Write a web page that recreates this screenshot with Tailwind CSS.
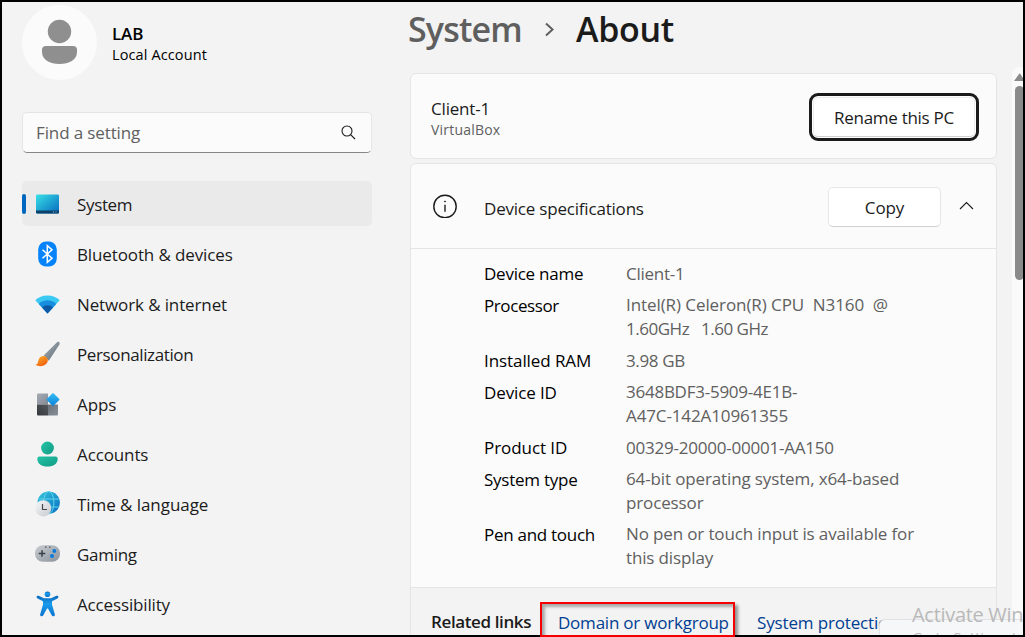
<!DOCTYPE html>
<html lang="en">
<head>
<meta charset="utf-8">
<title>System - About</title>
<script src="https://cdn.jsdelivr.net/npm/@tailwindcss/browser@4"></script>
</head>
<body class="bg-[#f3f3f3]">
<div class="relative flex w-[1025px] h-[637px] overflow-hidden border-2 border-black bg-[#f3f3f3] text-[#1b1b1b] text-[17px] tracking-[-0.120px] font-['Open_Sans','Noto_Sans',sans-serif] whitespace-nowrap">

  <aside class="w-[370px] shrink-0 pl-5 pt-[3px]">
    <div class="flex items-center h-[75px]">
      <svg class="w-[75px] h-[75px]" viewBox="0 0 75 75"><circle cx="37.5" cy="37.5" r="37.5" fill="#fbfbfb"/><circle cx="37.5" cy="26.5" r="11.7" fill="#8f8f8f"/><path d="M24 41h27a4 4 0 0 1 4 4v2c0 8-8 12-17.500 12S20 55 20 47v-2a4 4 0 0 1 4-4z" fill="#8f8f8f"/></svg>
      <div class="ml-[15px] pt-[2px] text-black">
        <div class="text-[17px] leading-[21px] font-semibold">LAB</div>
        <div class="text-[14.500px] leading-[21px] tracking-[0.120px]">Local Account</div>
      </div>
    </div>
    <div class="mt-8 flex items-center justify-between h-[41px] w-[350px] pl-[13px] pr-[15px] rounded-[5px] border border-[#e5e5e5] border-b-[#868686] bg-[#fbfbfb] text-[#606060]">
      <span class="tracking-[-0.120px]">Find a setting</span>
      <svg class="w-[15px] h-[15px]" viewBox="0 0 15 15" fill="none" stroke="#1b1b1b" stroke-width="1.100"><circle cx="6" cy="6" r="5"/><path d="M9.600 9.600 14 14"/></svg>
    </div>
    <nav class="mt-7 flex flex-col gap-[5px] w-[350px]">
      <div class="relative flex items-center h-[45px] pl-[13px] gap-[17px] rounded-[5px] bg-[#eaeaea]">
        <i class="absolute left-0 top-[13px] w-1 h-5 rounded-full bg-[#0067c0]"></i>
        <svg class="w-[25px] h-[26px]" viewBox="0 0 25 26"><defs><linearGradient id="sys" x1="0" y1="0" x2="1" y2="1"><stop stop-color="#37e0e6"/><stop offset="1" stop-color="#0669bf"/></linearGradient></defs><rect x="1" y="3.500" width="23" height="19" rx="1.300" fill="url(#sys)"/><path d="M1 19.500h23v1.800a1.200 1.200 0 0 1-1.200 1.200H2.200A1.200 1.200 0 0 1 1 21.300z" fill="#0b4068"/><path d="M18 21h1m1.500 0h1" stroke="#8ac8e6"/></svg>
        <span class="pt-[2px] tracking-[-0.350px]">System</span>
      </div>
      <div class="flex items-center h-[45px] pl-[13px] gap-[17px]">
        <svg class="w-[25px] h-[26px]" viewBox="0 0 25 26"><rect x="3.200" y=".5" width="18.600" height="25" rx="8" fill="#0683fb"/><path d="m7.500 8.700 9.500 8.600-4.700 4V4.700l4.700 4-9.500 8.600" fill="none" stroke="#fff" stroke-width="1.500"/></svg>
        <span class="pt-[2px]">Bluetooth &amp; devices</span>
      </div>
      <div class="flex items-center h-[45px] pl-[13px] gap-[17px]">
        <svg class="w-[25px] h-[26px]" viewBox="0 0 25 26"><path d="M12.500 22.500.3 9.300Q5 4.500 12.500 4.500T24.700 9.300z" fill="#39c9f3"/><path d="M12.500 22.500 3.800 13Q7.500 9.300 12.500 9.300T21.200 13z" fill="#198ddd"/><path d="M12.500 22.500 7 16.500q2.200-2.300 5.500-2.300t5.500 2.300z" fill="#0c58a4"/></svg>
        <span class="pt-[2px]">Network &amp; internet</span>
      </div>
      <div class="flex items-center h-[45px] pl-[13px] gap-[17px]">
        <svg class="w-[25px] h-[26px]" viewBox="0 0 25 26"><defs><linearGradient id="brush" x1="0" y1="0" x2="1" y2="1"><stop stop-color="#aab4bc"/><stop offset="1" stop-color="#5d6972"/></linearGradient><linearGradient id="paint" x1="0" y1="0" x2=".7" y2="1"><stop stop-color="#ffb52d"/><stop offset="1" stop-color="#ef5d0c"/></linearGradient></defs><path d="M8.700 14.500 22 1.300c1.500-1.200 3.400.3 2.400 2.100L13.800 19.700z" fill="url(#brush)"/><path d="M.5 24c2.700-1 2.300-2.800 3-5 1-3.500 4.400-5 7.300-3.300 3 1.700 2.500 5.700 0 7.600C8 25.500 3.800 25.700.5 24z" fill="url(#paint)"/></svg>
        <span class="pt-[2px] tracking-[-0.380px]">Personalization</span>
      </div>
      <div class="flex items-center h-[45px] pl-[13px] gap-[17px]">
        <svg class="w-[25px] h-[26px]" viewBox="0 0 25 26"><defs><linearGradient id="tileA" x1="0" y1="0" x2="1" y2="1"><stop stop-color="#a6abb4"/><stop offset="1" stop-color="#838993"/></linearGradient><linearGradient id="tileB" x1="0" y1="1" x2="1" y2="0"><stop stop-color="#35393d"/><stop offset="1" stop-color="#54595e"/></linearGradient><linearGradient id="tileC" x1="0" y1="0" x2="1" y2="1"><stop stop-color="#6b7179"/><stop offset="1" stop-color="#8a9098"/></linearGradient><linearGradient id="dia" x1="0" y1="0" x2="1" y2="1"><stop stop-color="#36bff4"/><stop offset="1" stop-color="#0b80db"/></linearGradient></defs><path d="M3 2.500h10V13.500H2v-10a1 1 0 0 1 1-1z" fill="url(#tileA)"/><path d="M2 13.500h11v11H3a1 1 0 0 1-1-1z" fill="url(#tileB)"/><path d="M13 13.500h10v10a1 1 0 0 1-1 1h-9z" fill="url(#tileC)"/><rect x="13.200" y="3.700" width="9.600" height="9.600" rx="1" transform="rotate(45 18 8.500)" fill="url(#dia)"/></svg>
        <span class="pt-[2px]">Apps</span>
      </div>
      <div class="flex items-center h-[45px] pl-[13px] gap-[17px]">
        <svg class="w-[25px] h-[26px]" viewBox="0 0 25 26"><defs><linearGradient id="acc" x1="0" y1="0" x2="1" y2="1"><stop stop-color="#24c3a6"/><stop offset="1" stop-color="#129b85"/></linearGradient></defs><circle cx="12.500" cy="7" r="6.400" fill="url(#acc)"/><path d="M4.500 15.500h16a2.200 2.200 0 0 1 2.200 2.200c0 5-4.200 7.800-10.200 7.800S2.300 22.700 2.300 17.700a2.200 2.200 0 0 1 2.200-2.200z" fill="url(#acc)"/></svg>
        <span class="pt-[2px]">Accounts</span>
      </div>
      <div class="flex items-center h-[45px] pl-[13px] gap-[17px]">
        <svg class="w-[25px] h-[26px]" viewBox="0 0 25 26"><defs><linearGradient id="globe" x1="0" y1="0" x2="1" y2="1"><stop stop-color="#35c8db"/><stop offset="1" stop-color="#086cc2"/></linearGradient><linearGradient id="clk" x1="0" y1="0" x2="1" y2="1"><stop stop-color="#f8f8f9"/><stop offset="1" stop-color="#c5c9ce"/></linearGradient></defs><circle cx="13.700" cy="11.700" r="11.200" fill="url(#globe)"/><g fill="none" stroke="#61d4ed" stroke-width="1"><ellipse cx="13.700" cy="11.700" rx="5.200" ry="11.200"/><path d="M3.700 8h20.200M3.700 16h20.200"/></g><circle cx="8.200" cy="17.300" r="8.100" fill="url(#clk)"/><path d="M7.500 13v5.500H12" fill="none" stroke="#42484e" stroke-width="1.200"/></svg>
        <span class="pt-[2px] tracking-[-0.060px]">Time &amp; language</span>
      </div>
      <div class="flex items-center h-[45px] pl-[13px] gap-[17px]">
        <svg class="w-[25px] h-[26px]" viewBox="0 0 25 26"><defs><linearGradient id="pad" x1="0" y1="0" x2="1" y2="1"><stop stop-color="#c8cdd1"/><stop offset="1" stop-color="#8b939c"/></linearGradient></defs><rect y="4.300" width="25" height="16.400" rx="7.800" fill="url(#pad)"/><path d="M7 9.200v6.600M3.700 12.500h6.600" stroke="#3a4045" stroke-width="1.500"/><circle cx="19.300" cy="10" r="2" fill="#0c7bdc"/><circle cx="17" cy="15" r="2" fill="#0c7bdc"/><path d="M10 6.200h1.500m2.500 0h1.500" stroke="#50575d" stroke-width="1.300"/></svg>
        <span class="pt-[2px] tracking-[-0.300px]">Gaming</span>
      </div>
      <div class="flex items-center h-[45px] pl-[13px] gap-[17px]">
        <svg class="w-[25px] h-[26px]" viewBox="0 0 25 26"><defs><linearGradient id="man" x1="0" y1="0" x2="0" y2="1"><stop stop-color="#0867bd"/><stop offset=".4" stop-color="#199bed"/><stop offset="1" stop-color="#0872ce"/></linearGradient></defs><circle cx="12.500" cy="3.300" r="2.800" fill="url(#man)"/><path d="M3.500 4.800 9 7.200h7l5.500-2.400c2-.6 2.600 1.800 1 2.700L17 10.300v3.200l2.800 9.800c.4 2-2.200 2.800-3.100 1L13 17.500h-1l-3.700 6.800c-.9 1.800-3.500 1-3.100-1L8 13.500v-3.200L2.500 7.500c-1.600-.9-1-3.300 1-2.700z" fill="url(#man)"/></svg>
        <span class="pt-[2px] tracking-[-0.150px]">Accessibility</span>
      </div>
    </nav>
  </aside>

  <main class="ml-[38px] w-[587px] shrink-0">
    <h1 class="flex items-center h-[54px] -ml-[2px] text-[34px] font-semibold">
      <span class="w-[114px] text-[#5f5f5f] tracking-[-0.850px]">System</span>
      <svg class="ml-[23px] w-[9px] h-[15px]" viewBox="0 0 9 15" fill="none" stroke="#5f5f5f" stroke-width="2"><path d="m1 1.500 6.500 6L1 13.500"/></svg>
      <span class="ml-[22px] tracking-[-0.300px]">About</span>
    </h1>
    <section class="mt-[17px] flex items-center justify-between h-[86px] pl-5 pr-[17px] rounded-[6px] border border-[#e5e5e5] bg-[#fbfbfb]">
      <div class="pt-[5px]">
        <div class="leading-[22px] tracking-[-0.180px]">Client-1</div>
        <div class="text-[14px] leading-[20px] tracking-[0.200px] text-[#606060]">VirtualBox</div>
      </div>
      <button class="mt-[2px] h-12 w-[170px] rounded-[9px] border-[3px] border-[#1b1b1b] bg-white p-px tracking-[-0.280px]"><span class="flex items-center justify-center h-full rounded-[5px] border border-[#ececec] border-b-[#cfcfcf] pt-px">Rename this PC</span></button>
    </section>
    <section class="mt-1 h-[480px] rounded-t-[6px] border border-[#e5e5e5] bg-[#fbfbfb]">
      <header class="flex items-center h-[85px] pl-[22px] pr-[22px] border-b border-[#e5e5e5]">
        <svg class="w-6 h-6" viewBox="0 0 24 24" fill="none" stroke="#1b1b1b" stroke-width="1.400"><circle cx="12" cy="12.500" r="11.200"/><path d="M12 10.800v7"/><circle cx="12" cy="7.500" r=".6" fill="#1b1b1b" stroke-width=".7"/></svg>
        <span class="ml-[27px] pt-[6px] tracking-[-0.200px]">Device specifications</span>
        <button class="mt-[2px] ml-auto w-[113px] h-10 rounded-[5px] border border-[#e6e6e6] border-b-[#cfcfcf] bg-white pt-px">Copy</button>
        <svg class="ml-[18px] -mt-px w-[15px] h-[9px]" viewBox="0 0 15 9" fill="none" stroke="#1b1b1b" stroke-width="1.100"><path d="m1 8 6.500-6.500L14 8"/></svg>
      </header>
      <dl class="h-[339px] pl-[73px] pt-[13px] grid grid-cols-[142px_1fr] content-start gap-y-[7.400px] leading-6 border-b border-[#e5e5e5] text-[#606060]">
        <dt class="text-black tracking-[-0.240px]">Device name</dt><dd class="tracking-[-0.250px]">Client-1</dd>
        <dt class="pt-px text-black tracking-[-0.400px]">Processor</dt><dd class="whitespace-pre tracking-[-0.080px]">Intel(R) Celeron(R) CPU  N3160  @<br><span class="tracking-[-0.480px]">1.60GHz   1.60 GHz</span></dd>
        <dt class="text-black tracking-[-0.080px]">Installed RAM</dt><dd class="tracking-[-0.350px]">3.98 GB</dd>
        <dt class="pt-px text-black">Device ID</dt><dd class="tracking-[-0.250px]">3648BDF3-5909-4E1B-<br><span class="tracking-[-0.120px]">A47C-142A10961355</span></dd>
        <dt class="text-black tracking-[-0.060px]">Product ID</dt><dd class="tracking-[-0.220px]">00329-20000-00001-AA150</dd>
        <dt class="pt-px text-black tracking-[-0.250px]">System type</dt><dd class="tracking-[-0.130px]">64-bit operating system, x64-based<br>processor</dd>
        <dt class="pt-px text-black tracking-[-0.280px]">Pen and touch</dt><dd class="tracking-[-0.140px]">No pen or touch input is available for<br>this display</dd>
      </dl>
      <footer class="flex h-[54px] pl-5 pt-[22px] bg-[#f3f3f3] leading-6 text-[#003e92]">
        <span class="w-[127px] font-semibold tracking-[-0.380px] text-[#1b1b1b]">Related links</span>
        <a class="w-[199px] pt-px tracking-[-0.220px]">Domain or workgroup</a>
        <a class="w-[126px] pt-px overflow-hidden tracking-[-0.150px]">System protection</a>
      </footer>
    </section>
  </main>

  <div class="ml-[15px] mt-[65px] w-5 shrink-0 h-[580px] rounded-tl-[7px] bg-[#fafafa] pl-[2px] pt-[6px]">
    <svg class="w-3 h-2" viewBox="0 0 12 8" fill="#8a8a8a"><path d="M5.200.8 0 8h11L6.200.8q-.5-.8-1 0z"/></svg>
    <div class="mt-[4.500px] ml-px w-[9px] h-[194.500px] rounded-full bg-[#8a8a8a]"></div>
  </div>

  <div class="absolute left-[877px] top-[617px] w-[160px] h-6 rounded-tl-[6px] border border-[#e0e2e5] bg-[#f6f7f9]"></div>
  <div class="absolute left-[910px] top-[600px] text-[#b9b9b9]">
    <div class="text-[20px] leading-[26px] tracking-[-0.300px]">Activate Windows</div>
    <div class="text-[15px] leading-[18px]">Go to Settings to activate Windows.</div>
  </div>
</div>
<div class="absolute left-[540px] top-[602px] w-[195px] h-[35px] border-2 border-[#f40000] shadow-[3px_3px_3px_rgba(0,0,0,0.4),inset_3px_3px_3px_rgba(0,0,0,0.3)]"></div>
</body>
</html>
